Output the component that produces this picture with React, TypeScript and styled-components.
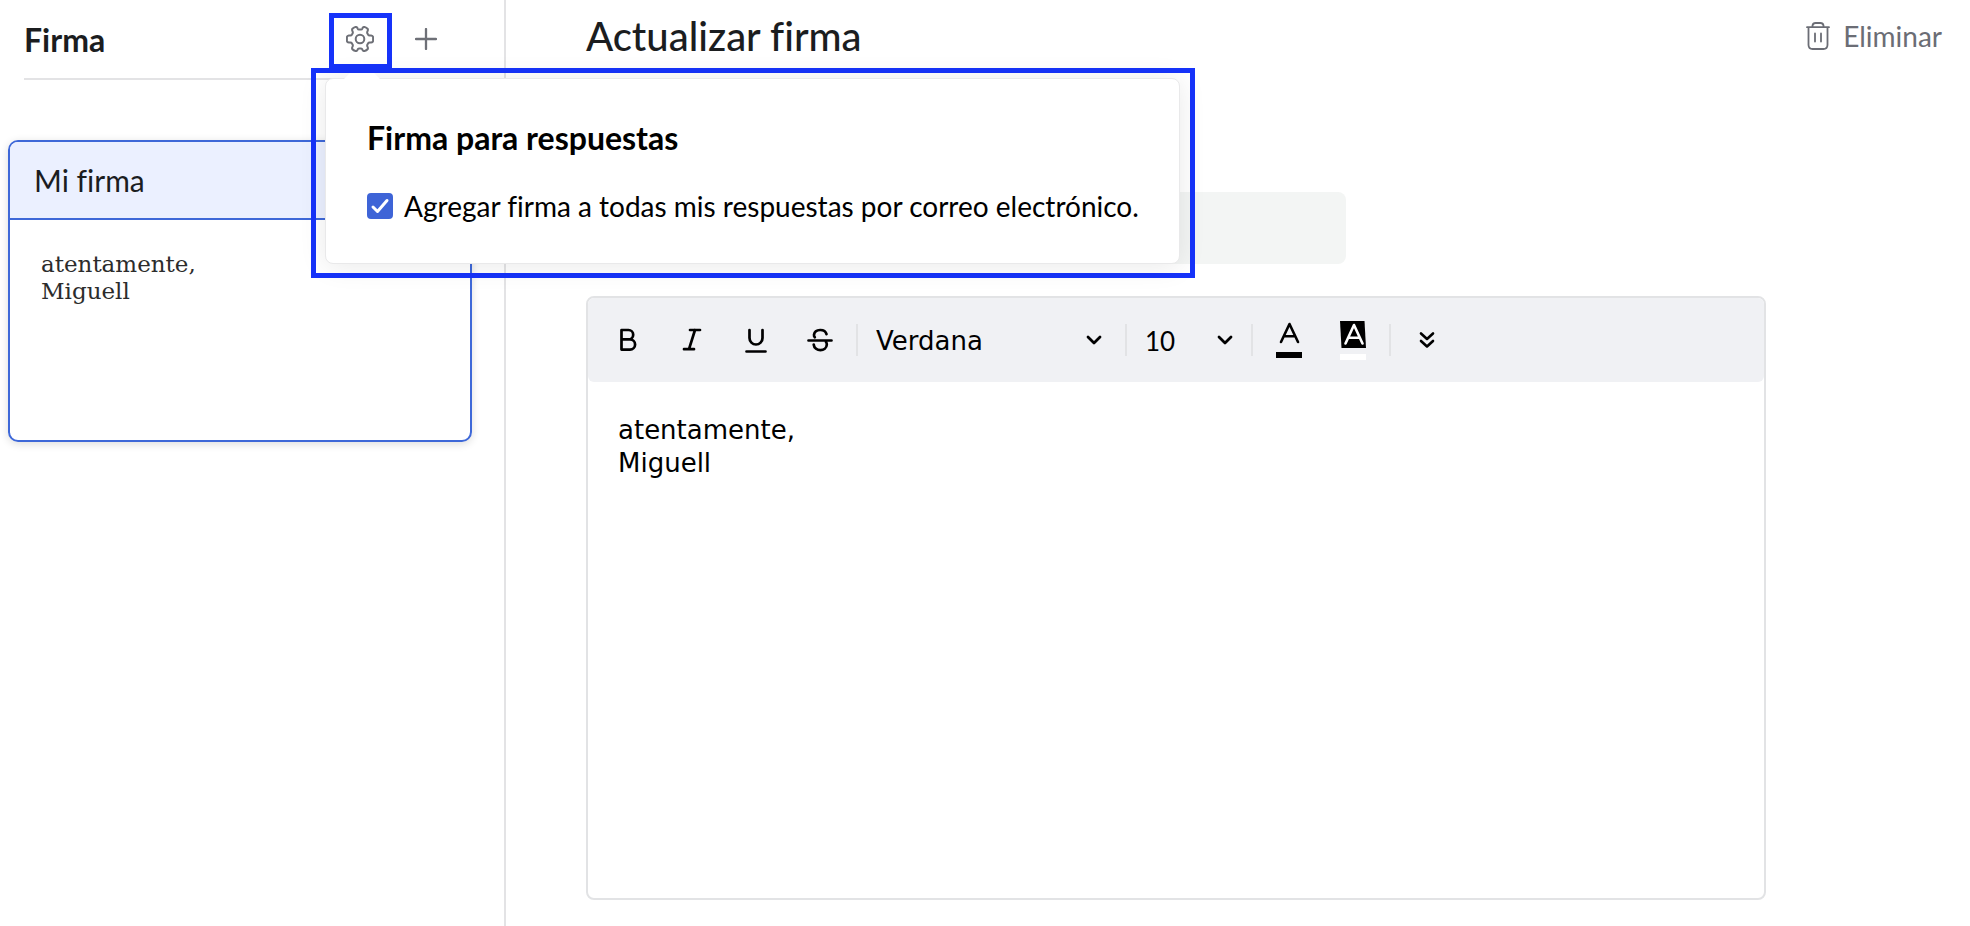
import React, { useState } from "react";
import styled, { createGlobalStyle } from "styled-components";

const Global = createGlobalStyle`
  *, *::before, *::after { box-sizing: border-box; }
  body {
    margin: 0;
    background: #fff;
    color: #1b1d1f;
    font-family: Lato, sans-serif;
    font-variant-ligatures: none;
  }
  button, select, input, textarea { font: inherit; color: inherit; }
  h1, h2, h3, p { margin: 0; }
`;

const Page = styled.div`
  display: flex;
  min-height: 100vh;
`;

const Sidebar = styled.aside`
  flex: 0 0 506px;
  border-right: 2px solid #e3e3e5;
  padding: 0 32px 0 8px;
`;

const SidebarHeader = styled.header`
  display: flex;
  align-items: center;
  justify-content: space-between;
  height: 80px;
  margin-left: 16px;
  padding-top: 4px;
  border-bottom: 2px solid #e3e3e5;
`;

const SidebarTitle = styled.h2`
  padding-bottom: 2px;
  font-size: 32px;
  line-height: 40px;
  font-weight: 700;
`;

const HeaderActions = styled.div`
  display: flex;
  align-items: center;
  gap: 2px;
  padding-right: 14px;
`;

const SettingsAnchor = styled.div`
  position: relative;
`;

const IconButton = styled.button<{ $outlined?: boolean }>`
  display: flex;
  align-items: center;
  justify-content: center;
  width: ${(p) => (p.$outlined ? 63 : 64)}px;
  height: 56px;
  padding: 0 1px 4px 0;
  border: ${(p) => (p.$outlined ? "5px solid #1633fa" : "0")};
  background: #fff;
  color: #6e7077;
`;

const PopoverFrame = styled.div`
  position: absolute;
  z-index: 2;
  top: 55px;
  left: -18px;
  padding: 5px 10px 9px 9px;
  border: 5px solid #1633fa;
`;

const Arrow = styled.svg`
  position: absolute;
  left: 27px;
  top: -12px;
`;

const Popover = styled.section`
  width: 855px;
  padding: 35px 40px 37px 41px;
  border: 1px solid #e9e9ea;
  border-radius: 8px;
  background: #fff;
  color: #000;
  box-shadow: 0 2px 28px rgba(0, 0, 0, 0.09);
`;

const PopoverTitle = styled.h3`
  font-size: 32px;
  line-height: 48px;
  font-weight: 700;
`;

const CheckLabel = styled.label`
  display: flex;
  align-items: center;
  gap: 11px;
  margin-top: 24px;
  font-size: 28px;
  line-height: 40px;
  white-space: nowrap;
`;

const CheckBox = styled.span`
  position: relative;
  display: flex;
  width: 26px;
  height: 26px;

  input {
    appearance: none;
    width: 26px;
    height: 26px;
    margin: 0;
    border: 2px solid #3e64d7;
    border-radius: 4px;
  }
  input:checked { background: #3e64d7; }
  svg { position: absolute; inset: 0; pointer-events: none; }
`;

const SignatureCard = styled.article`
  height: 302px;
  margin-top: 60px;
  border: 2px solid #3e68d8;
  border-radius: 10px;
  overflow: hidden;
  box-shadow: 0 2px 8px rgba(0, 0, 0, 0.14);
`;

const CardTitle = styled.h3`
  padding: 18px 24px;
  border-bottom: 2px solid #3e68d8;
  background: #ebf0ff;
  font-size: 30px;
  line-height: 40px;
  font-weight: 400;
`;

const CardPreview = styled.p`
  padding: 31px;
  color: #2c2c2c;
  font-family: "DejaVu Serif", serif;
  font-size: 23px;
  line-height: 27px;
`;

const Main = styled.main`
  flex: 1;
  min-width: 0;
  padding: 0 28px 26px 80px;
`;

const MainHeader = styled.header`
  display: flex;
  align-items: center;
  justify-content: space-between;
  height: 72px;
`;

const MainTitle = styled.h1`
  font-size: 40px;
  line-height: 48px;
  font-weight: 500;
`;

const DeleteButton = styled.button`
  display: flex;
  align-items: center;
  gap: 13px;
  padding: 0;
  border: 0;
  background: transparent;
  color: #6b6d75;
  font-size: 28px;
  line-height: 40px;
`;

const NameInput = styled.input`
  display: block;
  width: 100%;
  max-width: 760px;
  height: 72px;
  margin-top: 120px;
  padding: 0 24px;
  border: 0;
  border-radius: 8px;
  background: #f3f5f4;
  font-size: 28px;
`;

const Editor = styled.section`
  max-width: 1180px;
  margin-top: 32px;
  border: 2px solid #e2e3e5;
  border-radius: 8px;
`;

const Toolbar = styled.div`
  display: flex;
  align-items: center;
  height: 84px;
  padding-left: 8px;
  border-radius: 6px;
  background: #f0f1f4;
  color: #000;
`;

const ToolButton = styled.button`
  display: flex;
  align-items: center;
  justify-content: center;
  width: 64px;
  height: 64px;
  padding: 0;
  border: 0;
  background: transparent;
`;

const Divider = styled.span`
  width: 2px;
  height: 32px;
  margin: 0 4px;
  background: #e2e3e5;
`;

const SelectWrap = styled.label<{ $width: number; $inset: number }>`
  position: relative;
  width: ${(p) => p.$width}px;
  height: 40px;

  svg { position: absolute; right: ${(p) => p.$inset}px; top: 8px; pointer-events: none; }
`;

const ToolSelect = styled.select<{ $family: string }>`
  appearance: none;
  width: 100%;
  height: 40px;
  padding: 2px 0 0 14px;
  border: 0;
  background: transparent;
  font-family: ${(p) => p.$family};
  font-size: 26px;
  line-height: 38px;
`;

const EditorText = styled.textarea`
  display: block;
  width: 100%;
  height: 516px;
  padding: 32px 30px;
  border: 0;
  outline: 0;
  resize: none;
  background: transparent;
  color: #000;
  font-family: Verdana, "DejaVu Sans", sans-serif;
  font-size: 26px;
  line-height: 33px;
`;

const line = {
  fill: "none",
  stroke: "currentColor",
  strokeWidth: 2,
  strokeLinecap: "round",
  strokeLinejoin: "round",
} as const;

const GearIcon = () => (
  <svg width="28" height="26" viewBox="0 0 28 26" {...line}>
    <circle cx="14" cy="13" r="4.3" />
    <path d="M9.800 .9Q11.300 1 11.700 2.600Q12 3.500 13 3.500H15Q16 3.500 16.300 2.600Q16.700 1 18.200 .9Q20.500 1.500 21.800 3Q22.200 4.200 21.400 5.500Q20.900 6.500 21.400 7.400L22.100 8.600Q22.600 9.400 23.600 9.400H25.200Q26.800 9.600 27.100 11V15Q26.800 16.400 25.200 16.600H23.600Q22.600 16.600 22.100 17.400L21.400 18.600Q20.900 19.500 21.400 20.500Q22.200 21.800 21.800 23Q20.500 24.500 18.200 25.100Q16.700 25 16.300 23.400Q16 22.500 15 22.500H13Q12 22.500 11.700 23.400Q11.300 25 9.800 25.100Q7.500 24.500 6.200 23Q5.800 21.800 6.600 20.500Q7.100 19.500 6.600 18.600L5.900 17.400Q5.400 16.600 4.400 16.600H2.800Q1.200 16.400 .9 15V11Q1.200 9.600 2.800 9.400H4.400Q5.400 9.400 5.900 8.600L6.600 7.400Q7.100 6.500 6.600 5.500Q5.800 4.200 6.200 3Q7.500 1.500 9.800 .9Z" />
  </svg>
);

const PlusIcon = () => (
  <svg width="22" height="22" viewBox="0 0 22 22" {...line} strokeWidth={2.3}>
    <path d="M11 1v20M1 11h20" />
  </svg>
);

const TrashIcon = () => (
  <svg width="24" height="28" viewBox="0 0 24 28" {...line} strokeWidth={1.8}>
    <path d="M1 5.200h22M6.500 5V3.500Q7 1 9.500 1h5Q17 1 17.500 3.500V5M2.500 5.500V23Q2.700 27 6.500 27h11Q21.300 27 21.500 23V5.500M9 11.500v8M15 11.500v8" />
  </svg>
);

const CheckIcon = () => (
  <svg width="26" height="26" viewBox="0 0 26 26" {...line} stroke="#fff" strokeWidth={3}>
    <path d="M6 14l4.500 4.500 9.500-11" />
  </svg>
);

const BoldIcon = () => (
  <svg width="28" height="28" viewBox="0 0 28 28" {...line} strokeWidth={2.7}>
    <path d="M7.500 4h7a4.700 4.700 0 0 1 0 9.400h-7zM7.500 13.400h8.500a5 5 0 0 1 0 10.200H7.500z" />
  </svg>
);

const ItalicIcon = () => (
  <svg width="28" height="28" viewBox="0 0 28 28" {...line} strokeWidth={2.7}>
    <path d="M12 4h10M6 23.200h10M17 4L11 23.200" />
  </svg>
);

const UnderlineIcon = () => (
  <svg width="28" height="28" viewBox="0 0 28 28" {...line} strokeWidth={2.7}>
    <path d="M7.500 4v8a6.500 6.500 0 0 0 13 0v-8M4.500 25.500h19" />
  </svg>
);

const StrikeIcon = () => (
  <svg width="28" height="28" viewBox="0 0 28 28" {...line} strokeWidth={2.7}>
    <path d="M2.500 14.500h23M20.500 8.200C19 2.500 9 2.500 8 8.700q-.2 1.500 .8 2.500M7.700 18.500C8.500 26 20.500 26 20.800 18.500q0-1.500-.8-2.500" />
  </svg>
);

const ChevronIcon = () => (
  <svg width="24" height="24" viewBox="0 0 24 24" {...line} strokeWidth={2.8}>
    <path d="M6 9l6 6 6-6" />
  </svg>
);

const TextColorIcon = () => (
  <svg width="26" height="36" viewBox="0 0 26 36" {...line} strokeWidth={2.6}>
    <path d="M5 20L13.500 2 22 20M8 14.200h11" />
    <path d="M0 30h26v6H0z" fill="#000" stroke="none" />
  </svg>
);

const HighlightIcon = () => (
  <svg width="26" height="39" viewBox="0 0 26 39" {...line} strokeWidth={2.6}>
    <path d="M0 0h24.500l1.500 27H1.500z" fill="#000" stroke="none" />
    <path d="M5.500 22.500L14 4l8.500 18.500M8.500 16.700h11" stroke="#fff" />
    <path d="M0 33h26v6H0z" fill="#fff" stroke="none" />
  </svg>
);

const MoreIcon = () => (
  <svg width="20" height="20" viewBox="0 0 20 20" {...line} strokeWidth={2.6}>
    <path d="M4 3.500l6 5.500 6-5.500M4 11l6 5.500 6-5.500" />
  </svg>
);

const SIGNATURE = "atentamente,\nMiguell";

export default function App() {
  const [addToReplies, setAddToReplies] = useState(true);
  const [text, setText] = useState(SIGNATURE);

  return (
    <>
      <Global />
      <Page>
        <Sidebar>
          <SidebarHeader>
            <SidebarTitle>Firma</SidebarTitle>
            <HeaderActions>
              <SettingsAnchor>
                <IconButton type="button" aria-label="Configuración" $outlined>
                  <GearIcon />
                </IconButton>
                <PopoverFrame>
                  <Popover>
                    <PopoverTitle>Firma para respuestas</PopoverTitle>
                    <CheckLabel>
                      <CheckBox>
                        <input
                          type="checkbox"
                          checked={addToReplies}
                          onChange={(e) => setAddToReplies(e.target.checked)}
                        />
                        {addToReplies && <CheckIcon />}
                      </CheckBox>
                      Agregar firma a todas mis respuestas por correo electrónico.
                    </CheckLabel>
                  </Popover>
                  <Arrow width="38" height="19" viewBox="0 0 38 19">
                    <path d="M19 0l3 3h-6z" fill="#fff" />
                    <path d="M7 12h24l7 7H0z" fill="#fff" />
                  </Arrow>
                </PopoverFrame>
              </SettingsAnchor>
              <IconButton type="button" aria-label="Agregar">
                <PlusIcon />
              </IconButton>
            </HeaderActions>
          </SidebarHeader>
          <SignatureCard>
            <CardTitle>Mi firma</CardTitle>
            <CardPreview>
              atentamente,
              <br />
              Miguell
            </CardPreview>
          </SignatureCard>
        </Sidebar>
        <Main>
          <MainHeader>
            <MainTitle>Actualizar firma</MainTitle>
            <DeleteButton type="button">
              <TrashIcon />
              Eliminar
            </DeleteButton>
          </MainHeader>
          <NameInput type="text" aria-label="Nombre de la firma" />
          <Editor>
            <Toolbar role="toolbar">
              <ToolButton type="button" aria-label="Negrita"><BoldIcon /></ToolButton>
              <ToolButton type="button" aria-label="Cursiva"><ItalicIcon /></ToolButton>
              <ToolButton type="button" aria-label="Subrayado"><UnderlineIcon /></ToolButton>
              <ToolButton type="button" aria-label="Tachado"><StrikeIcon /></ToolButton>
              <Divider />
              <SelectWrap $width={259} $inset={15}>
                <ToolSelect aria-label="Fuente" $family='"DejaVu Sans", sans-serif'>
                  <option>Verdana</option>
                </ToolSelect>
                <ChevronIcon />
              </SelectWrap>
              <Divider />
              <SelectWrap $width={116} $inset={10}>
                <ToolSelect aria-label="Tamaño" $family="Lato, sans-serif">
                  <option>10</option>
                </ToolSelect>
                <ChevronIcon />
              </SelectWrap>
              <Divider />
              <ToolButton type="button" aria-label="Color de texto"><TextColorIcon /></ToolButton>
              <ToolButton type="button" aria-label="Color de fondo"><HighlightIcon /></ToolButton>
              <Divider />
              <ToolButton type="button" aria-label="Más"><MoreIcon /></ToolButton>
            </Toolbar>
            <EditorText
              aria-label="Contenido de la firma"
              spellCheck={false}
              value={text}
              onChange={(e) => setText(e.target.value)}
            />
          </Editor>
        </Main>
      </Page>
    </>
  );
}
